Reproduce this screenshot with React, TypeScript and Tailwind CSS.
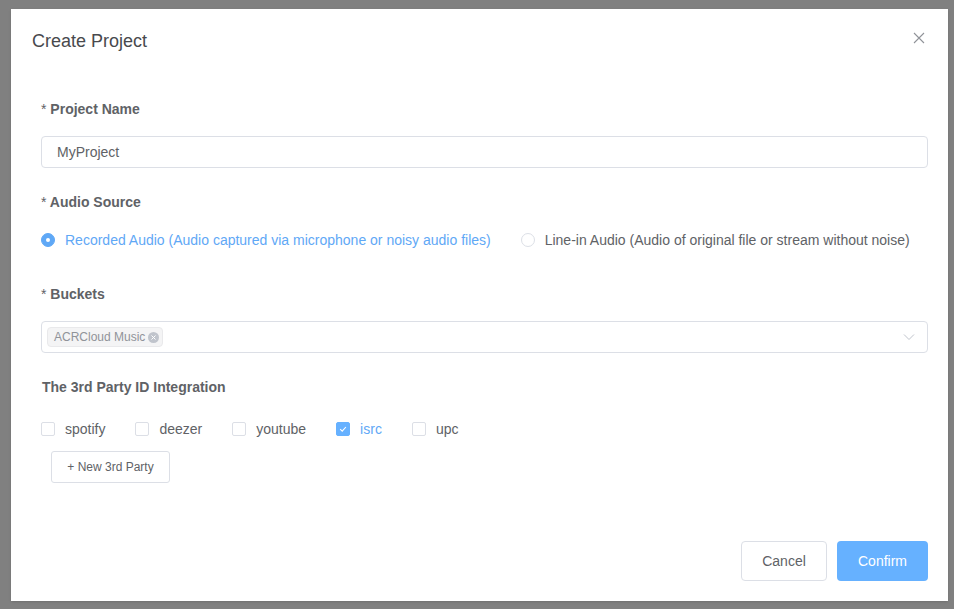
import React from "react";

const font = { fontFamily: '"Liberation Sans", Arial, Helvetica, sans-serif' };

function Checkbox({ label, checked }: { label: string; checked?: boolean }) {
  return (
    <label className="flex items-center mr-[30px] h-5 shrink-0 whitespace-nowrap">
      <span
        className={
          "w-[14px] h-[14px] rounded-[2px] border flex items-center justify-center " +
          (checked ? "bg-[#66b1ff] border-[#66b1ff]" : "bg-white border-[#dcdfe6]")
        }
      >
        {checked && (
          <svg width="10" height="10" viewBox="0 0 10 10">
            <path d="M2.2 5.2 L4.2 7.1 L7.9 3" fill="none" stroke="white" strokeWidth="1.1" />
          </svg>
        )}
      </span>
      <span className={"pl-[10px] text-[14px] " + (checked ? "text-[#5fa8f6]" : "text-[#606266]")}>{label}</span>
    </label>
  );
}

function Radio({ label, checked }: { label: string; checked?: boolean }) {
  return (
    <label className="flex items-center mr-[30px] h-5 shrink-0 whitespace-nowrap">
      <span
        className={
          "w-[14px] h-[14px] rounded-full border flex items-center justify-center " +
          (checked ? "bg-[#5fa8f6] border-[#5fa8f6]" : "bg-white border-[#dcdfe6]")
        }
      >
        {checked && <span className="w-[4px] h-[4px] rounded-full bg-white" />}
      </span>
      <span className={"pl-[10px] text-[14px] " + (checked ? "text-[#5fa8f6]" : "text-[#606266]")}>{label}</span>
    </label>
  );
}

export default function App() {
  return (
    <div style={font} className="w-[954px] h-[609px] bg-[#808080] pl-[11px] pt-[9px] overflow-hidden">
      <div className="w-[937px] h-[592px] bg-white flex flex-col relative shadow-sm">
        <div className="pt-[20px] pl-[21px] pr-[20px] pb-[10px] flex items-center justify-between">
          <span className="text-[18px] leading-[24px] text-[#48494d]">Create Project</span>
          <svg width="12" height="12" viewBox="0 0 12 12" className="mr-[3px] -mt-[7px]">
            <path d="M1 1 L11 11 M11 1 L1 11" stroke="#909399" strokeWidth="1.1" />
          </svg>
        </div>
        <div className="pl-[30px] pr-[20px] pt-[36px] flex flex-col">
          <div className="text-[14px] leading-5 font-bold text-[#606266]">
            <span className="font-normal text-[#606266]">*</span> Project Name
          </div>
          <div className="mt-[17px] h-[32px] border border-[#dcdfe6] rounded-[4px] px-[15px] flex items-center text-[14px] text-[#606266]">
            MyProject
          </div>
          <div className="mt-[24px] text-[14px] leading-5 font-bold text-[#606266]">
            <span className="font-normal">*</span> Audio Source
          </div>
          <div className="mt-[18px] flex items-center">
            <Radio label="Recorded Audio (Audio captured via microphone or noisy audio files)" checked />
            <Radio label="Line-in Audio (Audio of original file or stream without noise)" />
          </div>
          <div className="mt-[34px] text-[14px] leading-5 font-bold text-[#606266]">
            <span className="font-normal">*</span> Buckets
          </div>
          <div className="mt-[17px] h-[32px] border border-[#dcdfe6] rounded-[4px] pl-[5px] pr-[12px] flex items-center justify-between">
            <span className="h-[20px] bg-[#f4f4f5] border border-[#e9e9eb] rounded-[4px] pl-[6px] pr-[3px] flex items-center text-[12px] text-[#909399]">
              ACRCloud Music
              <span className="ml-[3px] w-[11px] h-[11px] rounded-full bg-[#c0c4cc] flex items-center justify-center">
                <svg width="7" height="7" viewBox="0 0 7 7">
                  <path d="M1.5 1.5 L5.5 5.5 M5.5 1.5 L1.5 5.5" stroke="white" strokeWidth="1" />
                </svg>
              </span>
            </span>
            <svg width="12" height="8" viewBox="0 0 12 8">
              <path d="M1 1.5 L6 6.5 L11 1.5" fill="none" stroke="#c0c4cc" strokeWidth="1" />
            </svg>
          </div>
          <div className="mt-[24px] pl-[1px] text-[14px] leading-5 font-bold text-[#606266]">The 3rd Party ID Integration</div>
          <div className="mt-[22px] flex items-center">
            <Checkbox label="spotify" />
            <Checkbox label="deezer" />
            <Checkbox label="youtube" />
            <Checkbox label="isrc" checked />
            <Checkbox label="upc" />
          </div>
          <div className="mt-[12px] pl-[10px]">
            <button className="h-[32px] w-[119px] border border-[#dcdfe6] rounded-[3px] text-[12px] text-[#606266] bg-white">
              + New 3rd Party
            </button>
          </div>
        </div>
        <div className="mt-auto pb-[20px] pr-[20px] flex justify-end gap-[10px]">
          <button className="h-[40px] w-[86px] border border-[#dcdfe6] rounded-[4px] text-[14px] text-[#606266] bg-white">
            Cancel
          </button>
          <button className="h-[40px] w-[91px] rounded-[4px] text-[14px] text-white bg-[#66b1ff]">Confirm</button>
        </div>
      </div>
    </div>
  );
}
